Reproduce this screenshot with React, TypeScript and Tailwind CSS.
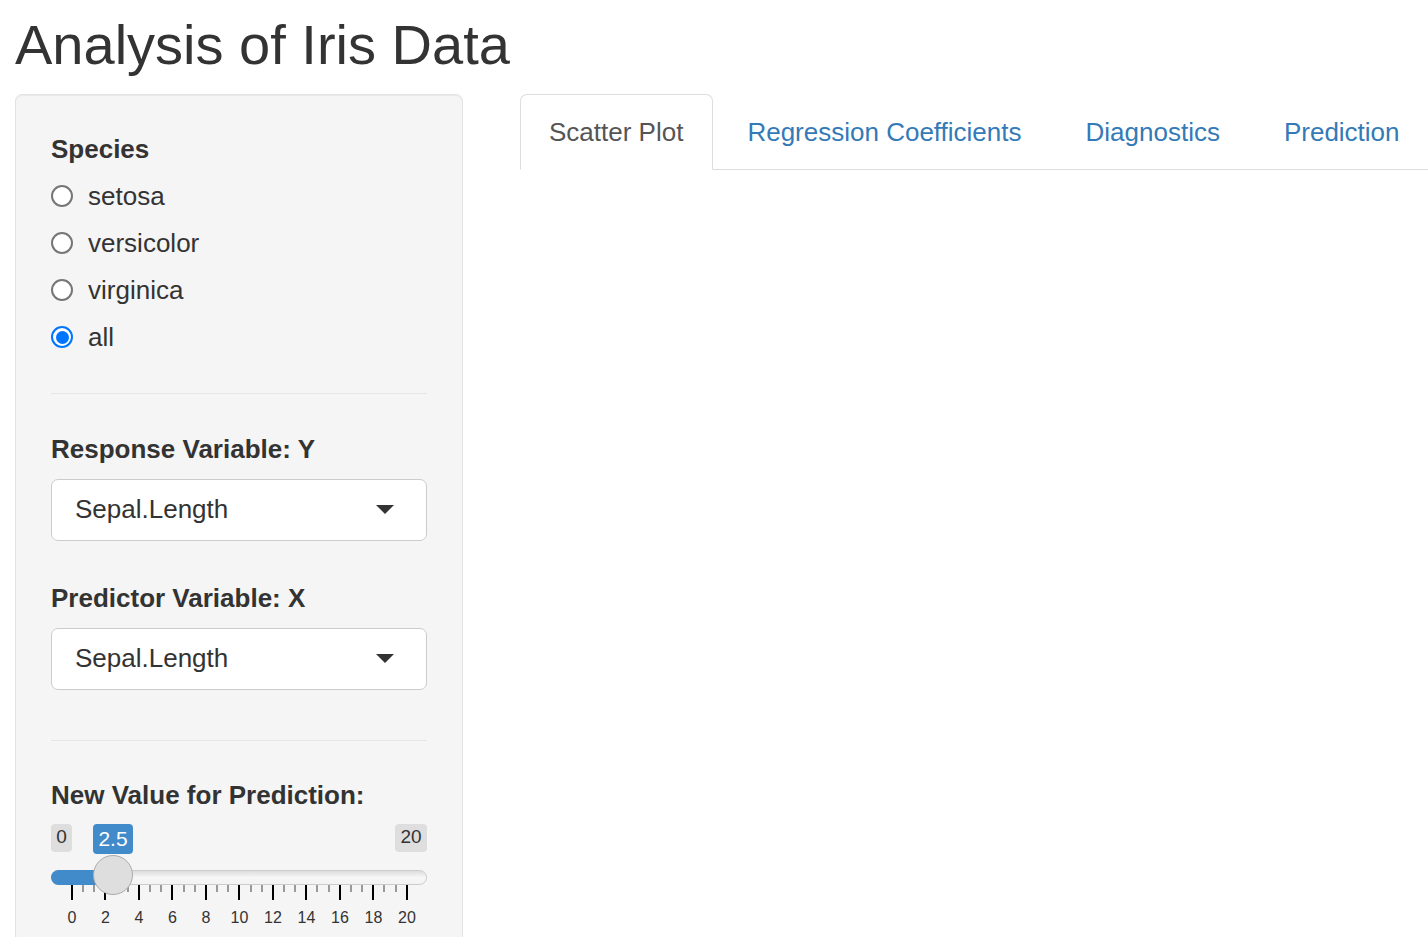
import React from "react";

const font = { fontFamily: '"Liberation Sans", Arial, Helvetica, sans-serif' };

const species = ["setosa", "versicolor", "virginica", "all"];
const tabs = ["Regression Coefficients", "Diagnostics", "Prediction"];

function Radio({ checked }: { checked: boolean }) {
  if (checked) {
    return (
      <span className="w-[22px] h-[22px] rounded-full border-2 border-[#0075ff] bg-white flex items-center justify-center shrink-0">
        <span className="w-[13px] h-[13px] rounded-full bg-[#0075ff]" />
      </span>
    );
  }
  return <span className="w-[22px] h-[22px] rounded-full border-2 border-[#767676] bg-white shrink-0" />;
}

function Select({ value }: { value: string }) {
  return (
    <div className="h-[62px] bg-white border border-[#cccccc] rounded-[7px] flex items-center justify-between pl-[23px] pr-[32px]">
      <span className="text-[26px] text-[#333]">{value}</span>
      <svg width="18" height="9" viewBox="0 0 18 9">
        <polygon points="0,0 18,0 9,9" fill="#333" />
      </svg>
    </div>
  );
}

function Slider() {
  // 11 major ticks with 2 minor ticks between each pair
  const marks = Array.from({ length: 31 }, (_, i) => i % 3 === 0);
  const labels = Array.from({ length: 11 }, (_, i) => i * 2);
  return (
    <div className="mt-[5px]">
      <div className="flex items-start h-[30px]">
        <div className="w-[21px] h-[28px] bg-[#dedede] rounded-[4px] flex items-center justify-center text-[19px] text-[#333]">0</div>
        <div className="ml-[21px] w-[40px] h-[30px] bg-[#428bca] rounded-[4px] flex items-center justify-center text-[21px] text-white">2.5</div>
        <div className="ml-auto w-[32px] h-[28px] bg-[#dedede] rounded-[4px] flex items-center justify-center text-[19px] text-[#333]">20</div>
      </div>

      <div className="relative mt-[16px] h-[15px] rounded-full border border-[#cccccc] bg-gradient-to-b from-[#dddddd] via-[#f7f7f7] to-[#f2f2f2]">
        <div className="absolute -left-px -top-px w-[62px] h-[15px] rounded-l-full bg-[#428bca]" />
        <div className="absolute left-[41px] -top-[16px] w-[40px] h-[40px] rounded-full bg-[#dedede] border border-[#ababab]" />
      </div>

      <div className="flex justify-between items-start h-[15px] pl-[20px] pr-[19px]">
        {marks.map((major, i) =>
          major ? (
            <span key={i} className="w-[2px] h-[15px] bg-black" />
          ) : (
            <span key={i} className="w-[2px] h-[7px] bg-[#999]" />
          )
        )}
      </div>

      <div className="flex justify-between mt-[6px] pl-[6px] pr-[5px]">
        {labels.map((l) => (
          <span key={l} className="w-[30px] text-center text-[16px] leading-[24px] text-[#333]">
            {l}
          </span>
        ))}
      </div>
    </div>
  );
}

export default function App() {
  return (
    <div className="min-h-screen bg-white text-[#333] pl-[15px]" style={font}>
      <h1 className="text-[56px] leading-[1.1] mt-[14px] mb-[18px] font-normal">Analysis of Iris Data</h1>

      <div className="flex gap-[57px]">
        <div className="w-[448px] shrink-0 bg-[#f5f5f5] border border-[#e3e3e3] rounded-[7px] px-[35px] pt-[31px] pb-[30px] shadow-[inset_0_1px_1px_rgba(0,0,0,0.05)]">
          <div className="h-[47px] flex items-center text-[26px] font-bold">Species</div>
          {species.map((s) => (
            <div key={s} className="h-[47px] flex items-center gap-[15px]">
              <Radio checked={s === "all"} />
              <span className="text-[26px]">{s}</span>
            </div>
          ))}

          <hr className="mt-[32px] border-0 border-t border-[#e6e6e6]" />

          <div className="mt-[32px] h-[47px] flex items-center text-[26px] font-bold">Response Variable: Y</div>
          <div className="mt-[6px]">
            <Select value="Sepal.Length" />
          </div>

          <div className="mt-[34px] h-[47px] flex items-center text-[26px] font-bold">Predictor Variable: X</div>
          <div className="mt-[6px]">
            <Select value="Sepal.Length" />
          </div>

          <hr className="mt-[50px] border-0 border-t border-[#e6e6e6]" />

          <div className="mt-[31px] h-[47px] flex items-center text-[26px] font-bold">New Value for Prediction:</div>
          <Slider />
        </div>

        <div className="flex-1">
          <div className="flex border-b border-[#dddddd] h-[76px]">
            <div className="h-[76px] -mb-px pt-[2px] pl-[28px] pr-[29px] mr-[4px] flex items-center bg-white border border-[#dddddd] border-b-transparent rounded-t-[7px] text-[26px] text-[#555] whitespace-nowrap">
              Scatter Plot
            </div>
            {tabs.map((t) => (
              <div key={t} className="h-[76px] -mb-px pt-[2px] px-[29px] mr-[4px] flex items-center border border-transparent text-[26px] text-[#337ab7] whitespace-nowrap">
                {t}
              </div>
            ))}
          </div>
        </div>
      </div>
    </div>
  );
}
